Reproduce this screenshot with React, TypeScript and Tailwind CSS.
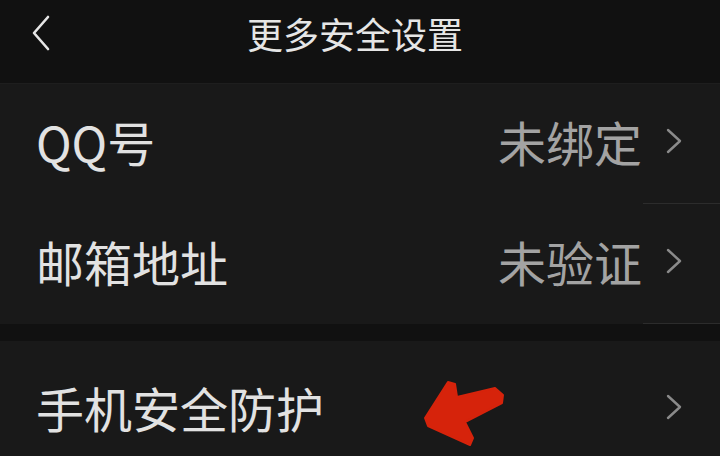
import React from 'react';

const font = { fontFamily: '"Noto Sans CJK SC", "Noto Sans", sans-serif' };

const Chevron: React.FC<{ className?: string }> = ({ className }) => (
  <svg viewBox="0 0 16 26" className={className} fill="none">
    <path d="M2 2 L14 13 L2 24" stroke="currentColor" strokeWidth="2.4" strokeLinecap="round" strokeLinejoin="round" />
  </svg>
);

const Row: React.FC<{ label: string; value?: string; arrow?: boolean; className?: string }> = ({
  label,
  value,
  arrow,
  className = 'pb-[6px]',
}) => (
  <div className={`relative flex h-[119px] items-center pl-[36px] pr-[38px] ${className}`}>
    <span className="flex-1 text-[48px] leading-none text-[#e2e2e2]">{label}</span>
    {value && <span className="text-[48px] leading-none text-[#a3a3a3]">{value}</span>}
    <Chevron className="ml-[24px] h-[26px] w-[16px] text-[#8a8a8a]" />
    {arrow && (
      <svg viewBox="0 0 90 70" className="absolute left-[420px] top-[37px] h-[70px] w-[90px]">
        {/* red annotation arrow */}
        <path
          d="M5 40 L28 4 L35 6 L37 19 L75 10 L83 17 L82 25 L45 44 L53 60 L50 67 L8 48 Z"
          fill="#d6230b"
          stroke="#d6230b"
          strokeWidth="2"
          strokeLinejoin="round"
        />
      </svg>
    )}
  </div>
);

const Divider: React.FC = () => (
  <div className="flex justify-end">
    <div className="h-px w-[77px] bg-[#2c2c2c]" />
  </div>
);

export default function App() {
  return (
    <div className="h-[456px] w-[720px] overflow-hidden bg-[#111111]" style={font}>
      {/* Header */}
      <div className="grid h-[84px] grid-cols-[1fr_auto_1fr] items-center border-b border-[#1e1e1e] pb-[18px]">
        <div className="pl-[32px]">
          <svg viewBox="0 0 18 36" className="h-[36px] w-[18px] text-[#e6e6e6]" fill="none">
            <path d="M16 2 L2 18 L16 34" stroke="currentColor" strokeWidth="2.6" strokeLinecap="round" strokeLinejoin="round" />
          </svg>
        </div>
        <h1 className="pr-[10px] text-[36px] leading-none text-[#e6e6e6]">更多安全设置</h1>
        <div />
      </div>

      {/* Section 1 */}
      <div className="bg-[#191919]">
        <Row label="QQ号" value="未绑定" />
        <Divider />
        <Row label="邮箱地址" value="未验证" />
        <Divider />
      </div>

      <div className="h-[17px]" />

      {/* Section 2 */}
      <div className="bg-[#191919]">
        <Row label="手机安全防护" arrow className="pt-[12px]" />
      </div>
    </div>
  );
}
